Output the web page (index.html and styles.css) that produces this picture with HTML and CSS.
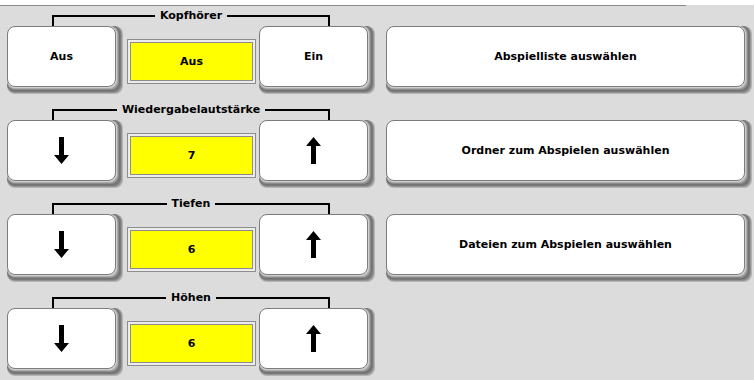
FILE: index.html
```html
<!DOCTYPE html>
<html lang="de">
<head>
    <meta charset="UTF-8">
    <meta name="viewport" content="width=device-width, initial-scale=1.0">
    <title>Audio</title>

    <link rel="stylesheet" href="styles.css">
</head>
<body>
    <div class="topbar"><div class="topline"></div></div>

    <div class="panel">
        <div class="settings">
            <!-- Kopfhörer -->
            <div class="group">
                <div class="caption">
                    <span class="seg seg-left"></span>
                    <span class="label">Kopfhörer</span>
                    <span class="seg seg-right"></span>
                </div>
                <div class="controls">
                    <div class="btn">Aus</div>
                    <div class="display"><div class="value">Aus</div></div>
                    <div class="btn">Ein</div>
                </div>
            </div>

            <!-- Wiedergabelautstärke -->
            <div class="group">
                <div class="caption">
                    <span class="seg seg-left"></span>
                    <span class="label">Wiedergabelautstärke</span>
                    <span class="seg seg-right"></span>
                </div>
                <div class="controls">
                    <div class="btn">
                        <svg class="arrow" width="15" height="27" viewBox="0 0 15 27"><path d="M5 0h5v18h5l-7.5 9l-7.5-9h5z"/></svg>
                    </div>
                    <div class="display"><div class="value">7</div></div>
                    <div class="btn">
                        <svg class="arrow" width="15" height="27" viewBox="0 0 15 27"><path d="M5 27h5v-18h5l-7.5-9l-7.5 9h5z"/></svg>
                    </div>
                </div>
            </div>

            <!-- Tiefen -->
            <div class="group">
                <div class="caption">
                    <span class="seg seg-left"></span>
                    <span class="label">Tiefen</span>
                    <span class="seg seg-right"></span>
                </div>
                <div class="controls">
                    <div class="btn">
                        <svg class="arrow" width="15" height="27" viewBox="0 0 15 27"><path d="M5 0h5v18h5l-7.5 9l-7.5-9h5z"/></svg>
                    </div>
                    <div class="display"><div class="value">6</div></div>
                    <div class="btn">
                        <svg class="arrow" width="15" height="27" viewBox="0 0 15 27"><path d="M5 27h5v-18h5l-7.5-9l-7.5 9h5z"/></svg>
                    </div>
                </div>
            </div>

            <!-- Höhen -->
            <div class="group">
                <div class="caption">
                    <span class="seg seg-left"></span>
                    <span class="label">Höhen</span>
                    <span class="seg seg-right"></span>
                </div>
                <div class="controls">
                    <div class="btn">
                        <svg class="arrow" width="15" height="27" viewBox="0 0 15 27"><path d="M5 0h5v18h5l-7.5 9l-7.5-9h5z"/></svg>
                    </div>
                    <div class="display"><div class="value">6</div></div>
                    <div class="btn">
                        <svg class="arrow" width="15" height="27" viewBox="0 0 15 27"><path d="M5 27h5v-18h5l-7.5-9l-7.5 9h5z"/></svg>
                    </div>
                </div>
            </div>
        </div>

        <div class="actions">
            <div class="btn btn-wide">Abspielliste auswählen</div>
            <div class="btn btn-wide">Ordner zum Abspielen auswählen</div>
            <div class="btn btn-wide">Dateien zum Abspielen auswählen</div>
        </div>
    </div>
</body>
</html>
```

FILE: styles.css
```css
/* Audio-Einstellungen */

body {
    margin: 0;
    background-color: #dcdcdc;
    font-family: "DejaVu Sans", Verdana, sans-serif;
    font-size: 11px;
    font-weight: bold;
    color: #000;
}
.topbar {
    height: 5px;
    background-color: #fff;
}
.topline {
    width: 686px;
    height: 5px;
    border-bottom: 1px solid #8a8a8a;
}
.panel {
    display: flex;
    padding-left: 7px;
}
.settings {
    width: 368px;
}
.group {
    height: 94px;
}
.caption {
    display: flex;
    align-items: flex-start;
    margin: 0 45px;
    padding-top: 4px;
}
.label {
    line-height: 13px;
    padding: 0 5px;
}
.seg {
    flex: 1;
    box-sizing: border-box;
    height: 11px;
    margin-top: 6px;
    border-top: 2px solid #000;
}
.seg-left {
    border-left: 2px solid #000;
}
.seg-right {
    border-right: 2px solid #000;
}
.controls {
    display: flex;
    align-items: flex-start;
    height: 61px;
}
/* Taste mit runder 3D-Kante rechts und unten */
.btn {
    box-sizing: border-box;
    width: 109px;
    height: 61px;
    display: flex;
    align-items: center;
    justify-content: center;
    background-color: #fff;
    border: 1px solid #7c7c7c;
    border-radius: 8px;
    box-shadow:
        1px 0 0 #cfcfcf, 0 1px 0 #cfcfcf, 1px 1px 0 #cfcfcf,
        2px 0 0 #ababab, 0 2px 0 #ababab, 2px 2px 0 #ababab,
        3px 0 0 #8c8c8c, 0 3px 0 #8c8c8c, 3px 3px 0 #8c8c8c,
        4px 0 0 #727272, 0 4px 0 #727272, 4px 4px 0 #727272,
        5px 0 0 #7a7a7a, 0 5px 0 #7a7a7a, 5px 5px 0 #7a7a7a,
        6px 0 0 #949494, 0 6px 0 #949494, 6px 6px 0 #949494,
        7px 0 0 #b4b4b4, 0 7px 0 #b4b4b4, 7px 7px 0 #b4b4b4;
}
.display {
    box-sizing: border-box;
    width: 129px;
    height: 45px;
    margin: 13px 3px 0 11px;
    padding: 2px;
    background-color: #ececec;
    border: 1px solid #8c8c8c;
}
.value {
    box-sizing: border-box;
    height: 100%;
    display: flex;
    align-items: center;
    justify-content: center;
    background-color: #ffff00;
    border: 1px solid #8c8c8c;
}
.arrow path {
    fill: #000;
}
.actions {
    display: flex;
    flex-direction: column;
    gap: 33px;
    padding-top: 21px;
    margin-left: 11px;
}
.btn-wide {
    width: 359px;
}
```
